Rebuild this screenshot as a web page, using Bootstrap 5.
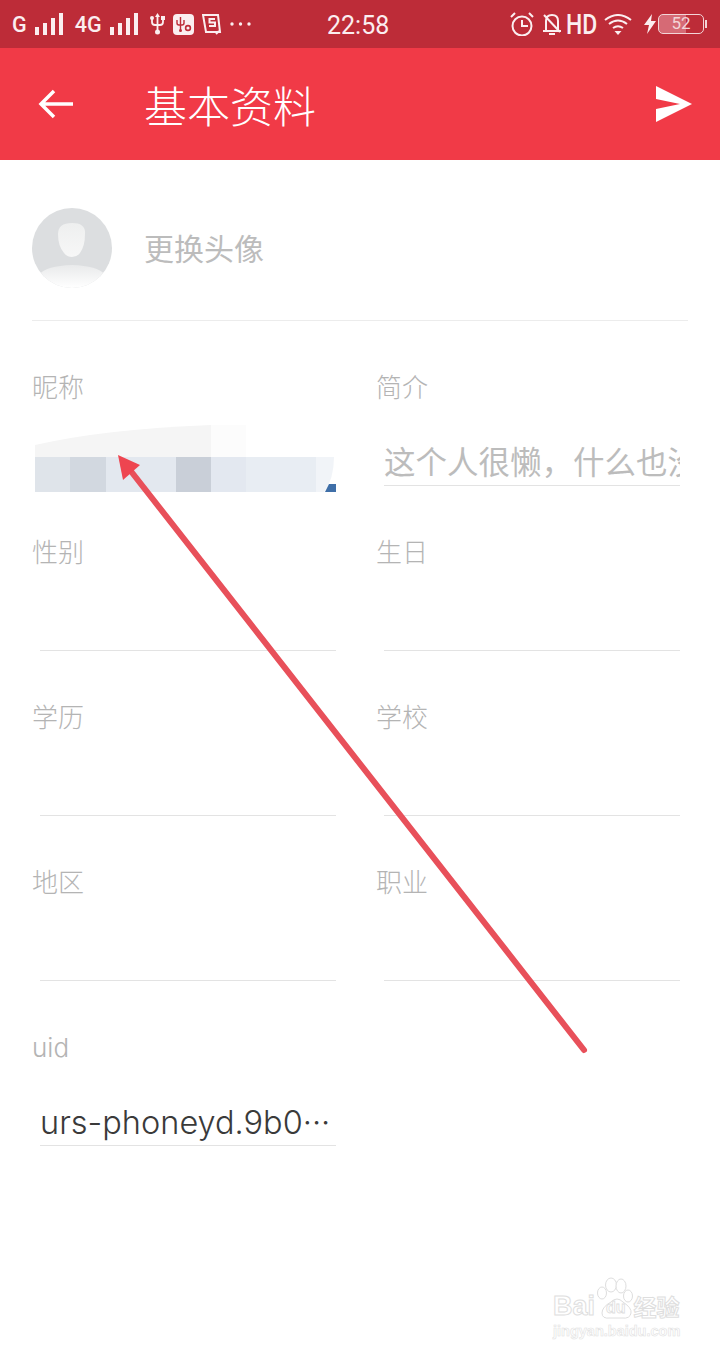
<!DOCTYPE html>
<html lang="zh-CN">
<head>
  <meta charset="UTF-8">
  <meta name="viewport" content="width=device-width, initial-scale=1.0">
  <title>基本资料</title>
  <link href="https://cdn.jsdelivr.net/npm/bootstrap@5.3.0/dist/css/bootstrap.min.css" rel="stylesheet">
  <style>
    body { font-family: "Noto Sans CJK SC", "Noto Sans", sans-serif; background: #fff; }
    .phone { width: 720px; height: 1356px; position: relative; overflow: hidden; background: #fff; }
    .status-bar { height: 48px; background: #bd2c38; color: #fbeef0; font-family: Roboto, sans-serif; padding: 0 12px; }
    .status-left { width: 315px; font-size: 21.500px; font-weight: 500; }
    .st-text { padding-top: 3px; }
    .status-time { font-size: 25px; width: 66px; padding-top: 3px; }
    .status-right { margin-left: 117px; }
    .st-hd { font-size: 28px; line-height: 1; font-weight: 500; width: 27px; margin: 0 3px 0 4px; transform: scaleX(.82); transform-origin: left; padding-top: 1px; }
    .batt { width: 46px; height: 20px; margin-left: 2px; border: 1.5px solid #f3d5d8; border-radius: 5px; font-size: 17px; line-height: 17px; color: #f3d5d8; text-align: center; background: linear-gradient(90deg, #d66a75 62%, transparent 62%); }
    .batt-nub { width: 2px; height: 8px; background: #f3d5d8; margin-left: 1px; }
    .app-bar { height: 112px; background: #f13a47; color: #fff; padding: 0 28px 0 38px; }
    .app-title { font-size: 43px; line-height: 1; margin: 0 0 0 71px; font-weight: 300; }
    .avatar-row { margin: 0 32px; height: 161px; border-bottom: 1px solid #ececec; padding-top: 48px; }
    .avatar-text { font-size: 30px; color: #bcbcbc; margin-left: 32px; line-height: 78px; }
    .info-grid { margin: 32px 0 0 32px; width: 688px; }
    .info-cell { height: 165px; padding-top: 17px; }
    .info-label { font-family: Inter, "Noto Sans CJK SC", sans-serif; font-size: 26px; font-weight: 300; line-height: 36px; color: #b4b4b4; }
    .info-value { margin: 34px 0 0 8px; width: 296px; height: 46px; border-bottom: 1px solid #e3e3e3; font-size: 31.500px; line-height: 40px; white-space: nowrap; overflow: hidden; color: #bcbcbc; }
    .info-value.filled { font-family: Inter, "Noto Sans", sans-serif; font-size: 32.500px; line-height: 46px; color: #3a3a3a; font-weight: 300; }
    .nick-blur { margin: 19px 0 0 3px; height: 67px; width: 301px; display: block; }
    .arrow-mark { position: absolute; left: 0; top: 0; pointer-events: none; }
    .watermark { position: absolute; left: 553px; top: 1276px; width: 130px; color: #fff; font-family: "Liberation Sans", sans-serif; font-weight: 700; }
    .wm-paw { position: absolute; left: 0; top: 0; }
    .wm-line { position: relative; margin-top: 18px; height: 24px; -webkit-text-stroke: 1px #dedede; }
    .wm-bai { font-size: 27px; line-height: 24px; }
    .wm-du { font-size: 16px; line-height: 24px; margin-left: 11px; padding-top: 3px; -webkit-text-stroke: .8px #dedede; }
    .wm-cn { font-family: "Noto Sans CJK SC", sans-serif; font-size: 23px; line-height: 24px; margin-left: 8px; white-space: nowrap; }
    .wm-sub { font-size: 14.500px; line-height: 16px; -webkit-text-stroke: .6px #e2e2e2; margin-top: 5px; white-space: nowrap; }
  </style>
</head>
<body class="m-0">
  <div class="phone">
    <div class="status-bar d-flex align-items-center">
      <div class="status-left d-flex align-items-center">
        <span class="st-text">G</span>
        <svg class="ms-2" width="28" height="22" viewBox="0 0 28 22" fill="#fbeef0"><rect x="0" y="14" width="4" height="8"/><rect x="8" y="10" width="4" height="12"/><rect x="16" y="5" width="4" height="17"/><rect x="24" y="0" width="4" height="22"/></svg>
        <span class="st-text ms-2 ps-1">4G</span>
        <svg class="ms-2" width="28" height="22" viewBox="0 0 28 22" fill="#fbeef0"><rect x="0" y="14" width="4" height="8"/><rect x="8" y="10" width="4" height="12"/><rect x="16" y="5" width="4" height="17"/><rect x="24" y="0" width="4" height="22"/></svg>
        <svg class="ms-2 ps-1" width="19" height="22" viewBox="0 0 15 22" fill="none" stroke="#fbeef0" stroke-width="1.800"><path d="M7.500 3v15M2 6v3q0 3 3 3h5q3 0 3-3V6"/><path d="M7.500 0L5 4h5z" fill="#fbeef0" stroke="none"/><circle cx="7.500" cy="19" r="2.500" fill="#fbeef0" stroke="none"/><circle cx="2" cy="5" r="2" fill="#fbeef0" stroke="none"/><rect x="11" y="3" width="4" height="4" fill="#fbeef0" stroke="none"/></svg>
        <svg class="ms-2" width="21" height="21" viewBox="0 0 21 21"><rect width="21" height="21" rx="4" fill="#fbeef0"/><path d="M7.500 3v13M4 6v3q0 2 2 2h3q2 0 2-2V6" fill="none" stroke="#bd2c38" stroke-width="1.400"/><circle cx="7.500" cy="16.500" r="1.500" fill="#bd2c38"/><circle cx="15" cy="14" r="2.400" fill="none" stroke="#bd2c38" stroke-width="1.600"/></svg>
        <svg class="ms-2" width="20" height="22" viewBox="0 0 20 22" fill="none" stroke="#fbeef0" stroke-width="2"><path d="M1 2h15l2 17H4zM13 6H7.500v3.500h5.500V13H7"/><path d="M14 21l3-3"/></svg>
        <svg class="ms-2" width="21" height="5" viewBox="0 0 21 5" fill="#fbeef0"><circle cx="2" cy="2" r="1.700"/><circle cx="10.500" cy="2" r="1.700"/><circle cx="19" cy="2" r="1.700"/></svg>
      </div>
      <div class="status-time">22:58</div>
      <div class="status-right d-flex align-items-center">
        <svg width="24" height="24" viewBox="0 0 24 24" fill="none" stroke="#fbeef0" stroke-width="2"><circle cx="12" cy="14" r="9.500"/><path d="M12 8v6h6M1 5l4-4M23 5l-4-4"/></svg>
        <svg class="ms-2" width="20" height="23" viewBox="0 0 20 23" fill="none" stroke="#fbeef0" stroke-width="2"><path d="M1 18h18M4 18V8q0-6 6-6t6 6v10M2 2l16 17M7 21h6"/></svg>
        <span class="st-hd">HD</span>
        <svg class="ms-2" width="28" height="21" viewBox="0 0 28 21" fill="none" stroke="#fbeef0" stroke-width="2"><path d="M1 6q13-10 26 0M5 10q9-7 18 0M9 14q5-3.500 10 0"/><path d="M10.500 17h7L14 21z" fill="#fbeef0" stroke="none"/></svg>
        <svg class="ms-2 ps-1" width="16" height="20" viewBox="0 0 12 20" fill="#fbeef0"><path d="M8 0L0 11h5l-2 9 9-13H7z"/></svg>
        <div class="batt">52</div>
        <div class="batt-nub"></div>
      </div>
    </div>

    <div class="app-bar d-flex align-items-center">
      <svg width="35" height="30" viewBox="0 0 35 30" fill="none" stroke="#fff" stroke-width="3.500"><path d="M35 15H3M16 2L3 15l13 13"/></svg>
      <h1 class="app-title">基本资料</h1>
      <svg class="ms-auto" width="36" height="36" viewBox="0 0 36 36" fill="#fff"><path d="M0 0l36 18L0 36V23l24-5L0 13z"/></svg>
    </div>

    <div class="avatar-row d-flex align-items-start">
      <svg width="80" height="80" viewBox="0 0 80 80">
        <defs>
          <linearGradient id="headFill" x1="0" y1="0" x2="0" y2="1"><stop offset="0" stop-color="#eeefef"/><stop offset="1" stop-color="#f7f7f7"/></linearGradient>
          <linearGradient id="bodyFill" x1="0" y1="0" x2="0" y2="1"><stop offset="0" stop-color="#e9eaeb"/><stop offset="1" stop-color="#fff"/></linearGradient>
          <clipPath id="avatarClip"><circle cx="40" cy="40" r="40"/></clipPath>
        </defs>
        <circle cx="40" cy="40" r="40" fill="#dcdee0"/>
        <g clip-path="url(#avatarClip)">
          <path d="M26 26q0-11 14-11t13 11q0 12-5 19-3 4-8 4t-8-4q-6-7-6-19z" fill="url(#headFill)"/>
          <path d="M8 66q6-8 32-9 26 1 32 9v14H8z" fill="url(#bodyFill)"/>
        </g>
      </svg>
      <span class="avatar-text">更换头像</span>
    </div>

    <div class="info-grid row g-0">
      <div class="col-6 info-cell">
        <div class="info-label">昵称</div>
        <svg class="nick-blur" viewBox="0 0 301 67">
          <path d="M0 20Q70 4 176 0V32H0z" fill="#f5f5f5"/>
          <rect x="176" y="0" width="35" height="32" fill="#fcfcfc"/>
          <rect x="0" y="32" width="35" height="35" fill="#dfe4ea"/>
          <rect x="35" y="32" width="36" height="35" fill="#d2d8e0"/>
          <rect x="71" y="32" width="70" height="35" fill="#e3e8ef"/>
          <rect x="141" y="32" width="35" height="35" fill="#c9cfd8"/>
          <rect x="176" y="32" width="35" height="35" fill="#e3e8f0"/>
          <rect x="211" y="32" width="70" height="35" fill="#e8edf3"/>
          <path d="M281 32h18q0 22-10 35h-8z" fill="#f1f4f8"/>
          <path d="M290 67l4-8h7v8z" fill="#3f6fa8"/>
        </svg>
      </div>
      <div class="col-6 info-cell">
        <div class="info-label">简介</div>
        <div class="info-value">这个人很懒，什么也没</div>
      </div>
      <div class="col-6 info-cell">
        <div class="info-label">性别</div>
        <div class="info-value"></div>
      </div>
      <div class="col-6 info-cell">
        <div class="info-label">生日</div>
        <div class="info-value"></div>
      </div>
      <div class="col-6 info-cell">
        <div class="info-label">学历</div>
        <div class="info-value"></div>
      </div>
      <div class="col-6 info-cell">
        <div class="info-label">学校</div>
        <div class="info-value"></div>
      </div>
      <div class="col-6 info-cell">
        <div class="info-label">地区</div>
        <div class="info-value"></div>
      </div>
      <div class="col-6 info-cell">
        <div class="info-label">职业</div>
        <div class="info-value"></div>
      </div>
      <div class="col-6 info-cell">
        <div class="info-label">uid</div>
        <div class="info-value filled">urs-phoneyd.9b0···</div>
      </div>
    </div>

    <!-- annotation arrow drawn on top of the screenshot -->
    <svg class="arrow-mark" width="720" height="1356" viewBox="0 0 720 1356">
      <path d="M584 1050L130 470" stroke="#e8505a" stroke-width="6" stroke-linecap="round" fill="none"/>
      <path d="M118 455L123 480 140 465z" fill="#ee4550"/>
    </svg>

    <div class="watermark">
      <svg class="wm-paw" width="90" height="44" viewBox="0 0 90 44" fill="#fff" stroke="#dedede" stroke-width="1"><ellipse cx="49" cy="17" rx="4.500" ry="6"/><ellipse cx="58" cy="9" rx="5.500" ry="7"/><ellipse cx="68" cy="10" rx="5" ry="7"/><ellipse cx="75" cy="20" rx="4.500" ry="6"/><path d="M58 26q6-6 12 0 9 6 8 11-1 6-9 5H57q-8 1-8-5 0-6 9-11z"/></svg>
      <div class="wm-line d-flex align-items-center">
        <span class="wm-bai">Bai</span>
        <span class="wm-du">du</span>
        <span class="wm-cn">经验</span>
      </div>
      <div class="wm-sub">jingyan.baidu.com</div>
    </div>
  </div>

  <script src="https://cdn.jsdelivr.net/npm/bootstrap@5.3.0/dist/js/bootstrap.bundle.min.js"></script>
</body>
</html>
